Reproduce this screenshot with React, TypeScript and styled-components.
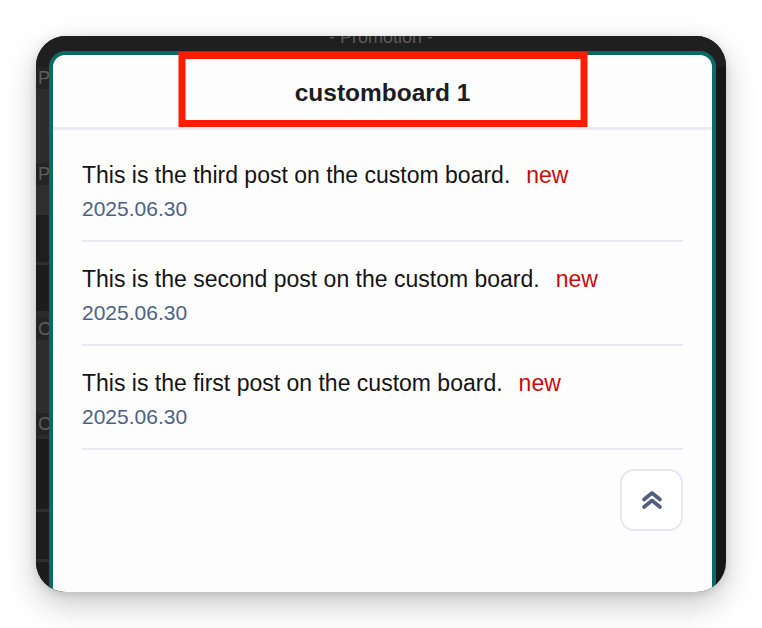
import { FC } from 'react';
import styled, { createGlobalStyle } from 'styled-components';

const GlobalStyle = createGlobalStyle`
  body {
    margin: 0;
    background: #ffffff;
    font-family: 'Liberation Sans', Arial, sans-serif;
  }
`;

const Stage = styled.div`
  padding: 36px 0 0 36px;
  width: 762px;
  height: 628px;
  box-sizing: border-box;
`;

const Frame = styled.div`
  position: relative;
  width: 690px;
  height: 556px;
  border-radius: 30px;
  overflow: hidden;
  background: #161616;
  box-shadow: 0 12px 32px rgba(0, 0, 0, 0.22), 0 2px 8px rgba(0, 0, 0, 0.12);
`;

/* page behind the modal, only its edges show */
const BackPage = styled.div`
  display: flex;
  flex-direction: column;
`;

const BackTitle = styled.div`
  height: 31px;
  margin-top: -9px;
  padding-bottom: 9px;
  box-sizing: content-box;
  text-align: center;
  font-size: 18px;
  line-height: 20px;
  color: #5c5c5c;
  background: #1f1f1f;
`;

const BackColumn = styled.div`
  width: 40px;
  display: flex;
  flex-direction: column;
`;

const BackLabel = styled.div`
  height: 22px;
  padding-left: 2px;
  font-size: 18px;
  line-height: 22px;
  color: #5e5e5e;
  background: #242424;
`;

const BackBlock = styled.div<{ $h: number; $bg: string }>`
  height: ${(p) => p.$h}px;
  background: ${(p) => p.$bg};
`;

const Modal = styled.div`
  position: absolute;
  top: 15px;
  left: 13px;
  right: 10px;
  bottom: -30px;
  border: 4px solid #0c6a65;
  border-radius: 16px;
  background: #fdfdfe;
`;

const Header = styled.div`
  height: 75px;
  padding-top: 4px;
  box-sizing: border-box;
  display: flex;
  align-items: center;
  justify-content: center;
  border-bottom: 3px solid #ebebf5;
`;

const HeaderTitle = styled.h2`
  margin: 0;
  font-size: 24.5px;
  font-weight: bold;
  color: #1c1c22;
`;

const Highlight = styled.div`
  position: absolute;
  top: -3px;
  left: 50%;
  transform: translateX(-50%);
  width: 409px;
  height: 75px;
  box-sizing: border-box;
  border: 7px solid #ff1c00;
  pointer-events: none;
`;

const Body = styled.div`
  padding: 8px 29px 0;
  display: flex;
  flex-direction: column;
`;

const PostList = styled.ul`
  list-style: none;
  margin: 0;
  padding: 0;
`;

const PostItem = styled.li`
  padding: 23px 0 17px;
  border-bottom: 2px solid #e8e8f0;
  display: flex;
  flex-direction: column;
  gap: 6px;
`;

const PostTitle = styled.div`
  font-size: 23px;
  line-height: 28px;
  color: #141414;
`;

const NewBadge = styled.span`
  margin-left: 16px;
  color: #cc0a0a;
`;

const PostDate = styled.div`
  font-size: 21px;
  line-height: 28px;
  color: #4a6286;
`;

const TopButton = styled.button`
  align-self: flex-end;
  margin-top: 19px;
  width: 63px;
  height: 62px;
  border: 2px solid #e8e8f4;
  border-radius: 14px;
  background: #ffffff;
  display: flex;
  align-items: center;
  justify-content: center;
  padding: 0;
  cursor: pointer;
`;

interface Post {
  title: string;
  date: string;
}

const posts: Post[] = [
  { title: 'This is the third post on the custom board.', date: '2025.06.30' },
  { title: 'This is the second post on the custom board.', date: '2025.06.30' },
  { title: 'This is the first post on the custom board.', date: '2025.06.30' },
];

const ChevronsUp: FC = () => (
  <svg width="22" height="20" viewBox="0 0 22 20" fill="none">
    <polyline points="3,9.5 11,3 19,9.5" stroke="#525b82" strokeWidth="3.6" strokeLinecap="round" strokeLinejoin="round" />
    <polyline points="3,17 11,10.5 19,17" stroke="#525b82" strokeWidth="3.6" strokeLinecap="round" strokeLinejoin="round" />
  </svg>
);

const App: FC = () => (
  <>
    <GlobalStyle />
    <Stage>
      <Frame>
        <BackPage>
          <BackTitle>- Promotion -</BackTitle>
          <BackColumn>
            <BackLabel>P</BackLabel>
            <BackBlock $h={74} $bg="#2c2c2c" />
            <BackLabel>P</BackLabel>
            <BackBlock $h={30} $bg="#2e2e2e" />
            <BackBlock $h={47} $bg="#1e1e1e" />
            <BackBlock $h={3} $bg="#2f2f2f" />
            <BackBlock $h={46} $bg="#1c1c1c" />
            <BackBlock $h={7} $bg="#2a2a2a" />
            <BackLabel>C</BackLabel>
            <BackBlock $h={73} $bg="#2d2d2d" />
            <BackLabel>C</BackLabel>
            <BackBlock $h={4} $bg="#2d2d2d" />
            <BackBlock $h={70} $bg="#1c1c1c" />
            <BackBlock $h={3} $bg="#2e2e2e" />
            <BackBlock $h={47} $bg="#1d1d1d" />
            <BackBlock $h={3} $bg="#2e2e2e" />
            <BackBlock $h={40} $bg="#1c1c1c" />
          </BackColumn>
        </BackPage>
        <Modal>
          <Header>
            <HeaderTitle>customboard 1</HeaderTitle>
          </Header>
          <Highlight />
          <Body>
            <PostList>
              {posts.map((post) => (
                <PostItem key={post.title}>
                  <PostTitle>
                    {post.title}
                    <NewBadge>new</NewBadge>
                  </PostTitle>
                  <PostDate>{post.date}</PostDate>
                </PostItem>
              ))}
            </PostList>
            <TopButton aria-label="Scroll to top">
              <ChevronsUp />
            </TopButton>
          </Body>
        </Modal>
      </Frame>
    </Stage>
  </>
);

export default App;
